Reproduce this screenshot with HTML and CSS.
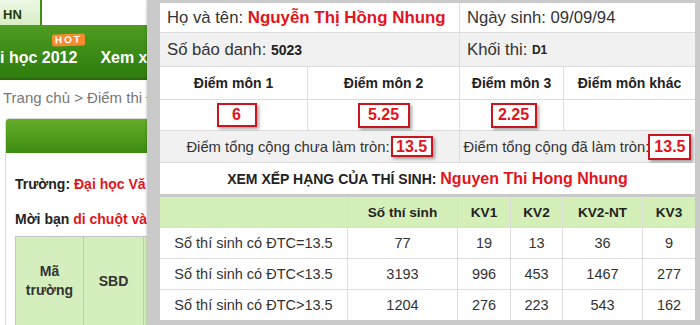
FILE: index.html
```html
<!DOCTYPE html>
<html lang="vi">
<head>
<meta charset="utf-8">
<title>Điểm thi</title>
<link rel="stylesheet" href="styles.css">
</head>
<body>
<div class="site">
  <div class="topbar"><div class="tab-hn">HN</div></div>
  <div class="nav">
    <span class="nav-item">i học 2012<span class="hot">HOT</span></span>
    <span class="nav-item">Xem x</span>
  </div>
  <div class="crumb">Trang chủ &gt; Điểm thi Đ</div>
  <div class="box">
    <div class="box-head"></div>
    <div class="box-body">
      <p class="line"><b>Trường:</b> <span class="red">Đại học Vă</span></p>
      <p class="line line2"><b>Mời bạn</b> <span class="red">di chuột và</span></p>
      <div class="bg-table">
        <div class="bg-cell">Mã<br>trường</div>
        <div class="bg-cell">SBD</div>
        <div class="bg-cell"></div>
      </div>
    </div>
  </div>
</div>

<div class="popup">
  <div class="info">
    <div class="cell span2 left">Họ và tên:&nbsp;<b class="red name">Nguyễn Thị Hồng Nhung</b></div>
    <div class="cell span2 left">Ngày sinh: 09/09/94</div>
    <div class="cell span2 left alt">Số báo danh:&nbsp;<b class="sbd">5023</b></div>
    <div class="cell span2 left alt">Khối thi:&nbsp;<b class="khoi">D1</b></div>
    <div class="cell head">Điểm môn 1</div>
    <div class="cell head">Điểm môn 2</div>
    <div class="cell head">Điểm môn 3</div>
    <div class="cell head">Điểm môn khác</div>
    <div class="cell"><span class="mark m1">6</span></div>
    <div class="cell"><span class="mark m2">5.25</span></div>
    <div class="cell"><span class="mark m3">2.25</span></div>
    <div class="cell"></div>
    <div class="cell span2 alt total">Điểm tổng cộng chưa làm tròn:<span class="mark t1">13.5</span></div>
    <div class="cell span2 alt total">Điểm tổng cộng đã làm tròn:<span class="mark t2">13.5</span></div>
    <div class="cell span4 title">XEM XẾP HẠNG CỦA THÍ SINH:&nbsp;<span class="red title-name">Nguyen Thi Hong Nhung</span></div>
  </div>
  <div class="rank">
    <div class="rcell rhead"></div>
    <div class="rcell rhead">Số thí sinh</div>
    <div class="rcell rhead">KV1</div>
    <div class="rcell rhead">KV2</div>
    <div class="rcell rhead">KV2-NT</div>
    <div class="rcell rhead">KV3</div>

    <div class="rcell">Số thí sinh có ĐTC=13.5</div>
    <div class="rcell">77</div>
    <div class="rcell">19</div>
    <div class="rcell">13</div>
    <div class="rcell">36</div>
    <div class="rcell">9</div>

    <div class="rcell">Số thí sinh có ĐTC&lt;13.5</div>
    <div class="rcell">3193</div>
    <div class="rcell">996</div>
    <div class="rcell">453</div>
    <div class="rcell">1467</div>
    <div class="rcell">277</div>

    <div class="rcell">Số thí sinh có ĐTC&gt;13.5</div>
    <div class="rcell">1204</div>
    <div class="rcell">276</div>
    <div class="rcell">223</div>
    <div class="rcell">543</div>
    <div class="rcell">162</div>
  </div>
</div>
</body>
</html>
```
FILE: styles.css
```css
* { box-sizing: border-box; }
html, body { margin: 0; padding: 0; }
body {
  width: 700px;
  height: 325px;
  overflow: hidden;
  position: relative;
  background: #fff;
  font-family: "Liberation Sans", Arial, sans-serif;
  color: #333;
}

/* background site */
.site { width: 147px; overflow: hidden; height: 325px; }
.topbar {
  height: 25px;
  display: flex;
  background: #fff;
}
.tab-hn {
  width: 42px;
  height: 25px;
  background: linear-gradient(#eef8e6, #d6eec4);
  border-right: 2px solid #3f8d16;
  font-weight: bold;
  font-size: 13px;
  color: #1f3a0c;
  padding: 7px 0 0 3px;
}
.nav {
  height: 55px;
  background: linear-gradient(#4e9c22, #3a8914 60%, #2f7c0d);
  border-bottom: 2px solid #276a09;
  display: flex;
  align-items: flex-end;
  padding-bottom: 11px;
  gap: 23px;
}
.nav-item {
  color: #fff;
  font-weight: bold;
  font-size: 16px;
  white-space: nowrap;
  position: relative;
}
.hot {
  position: absolute;
  left: 52px;
  top: -15px;
  width: 33px;
  height: 12px;
  background: #f58a2e;
  border-radius: 2px;
  color: #fff;
  font-size: 10px;
  line-height: 12px;
  letter-spacing: 2px;
  text-align: center;
  transform: rotate(-2deg);
}
.crumb {
  height: 38px;
  line-height: 36px;
  font-size: 15px;
  color: #777;
  padding-left: 3px;
  white-space: nowrap;
}
.box {
  margin-left: 5px;
  width: 600px;
  border: 1px solid #dadada;
  border-radius: 4px 4px 0 0;
  height: 220px;
}
.box-head {
  height: 34px;
  background: linear-gradient(#64ad28, #3f8c13);
  border-radius: 3px 3px 0 0;
}
.box-body { padding: 21px 0 0 9px; }
.line {
  margin: 0;
  height: 20px;
  line-height: 20px;
  font-size: 14px;
  font-weight: bold;
  color: #222;
  white-space: nowrap;
}
.line2 { margin-top: 15px; }
.red { color: #e3141c; }
.bg-table {
  margin-top: 7px;
  display: grid;
  grid-template-columns: 68px 60px 200px;
  border-left: 1px solid #c4c4c4;
  border-top: 1px solid #c4c4c4;
}
.bg-cell {
  background: #d4eebd;
  border-right: 1px solid #c4c4c4;
  height: 100px;
  display: flex;
  align-items: center;
  justify-content: center;
  text-align: center;
  font-weight: bold;
  font-size: 14px;
  line-height: 19px;
  color: #333;
  padding-bottom: 12px;
}

/* popup overlay */
.popup {
  position: absolute;
  left: 147px;
  top: 0;
  width: 553px;
  height: 325px;
  background: #cacaca;
  padding: 3px 5px 5px 13px;
  box-shadow: -1px 0 2px rgba(0,0,0,0.15);
}
.info {
  display: grid;
  grid-template-columns: 147px 151px 103px 131px;
  grid-template-rows: 29px 33px 32px 30px 31px 31px;
  gap: 1px;
  background: #dcdcdc;
}
.cell {
  background: #fff;
  display: flex;
  align-items: center;
  justify-content: center;
  white-space: nowrap;
  font-size: 15px;
  color: #333;
}
.alt { background: #f1f1f1; }
.span2 { grid-column: span 2; }
.span4 { grid-column: span 4; }
.left {
  justify-content: flex-start;
  padding-left: 7px;
  font-size: 16.7px;
}
.name { font-size: 16.9px; }
.sbd { font-size: 14px; color: #222; }
.khoi { font-size: 12px; color: #222; }
.head { font-weight: bold; font-size: 14px; color: #222; }
.total { font-size: 14.8px; }
.title { font-weight: bold; font-size: 14px; color: #222; }
.title-name { font-size: 16px; }

.mark {
  display: inline-flex;
  align-items: center;
  justify-content: center;
  border: 2px solid #c9161e;
  color: #e3141c;
  font-weight: bold;
  font-size: 16px;
  background: #fff;
  box-shadow: 2px 2px 3px rgba(0,0,0,0.35);
}
.m1 { width: 40px; height: 24px; margin-left: 6px; }
.m2 { width: 52px; height: 25px; }
.m3 { width: 46px; height: 25px; margin-left: 4px; }
.t1 { width: 42px; height: 21px; margin-left: 1px; }
.t2 { width: 43px; height: 26px; margin-left: -1px; }

.rank {
  margin-top: 3px;
  display: grid;
  grid-template-columns: 187px 109px 52px 51px 79px 52px;
  grid-template-rows: 30px 30px 30px 30px;
  gap: 1px;
  background: #dcdcdc;
}
.rcell {
  background: #fff;
  display: flex;
  align-items: center;
  justify-content: center;
  font-size: 14.5px;
  color: #333;
  white-space: nowrap;
}
.rhead {
  background: #d5efb9;
  font-weight: bold;
  font-size: 13.6px;
  color: #222;
}
```
